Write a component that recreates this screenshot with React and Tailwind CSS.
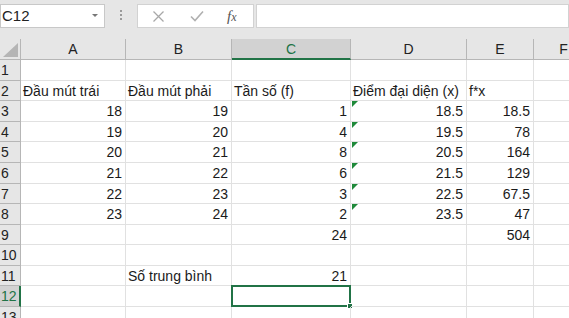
import React from 'react';

const cols = [
  { key: 'A', w: 'w-[105px]' },
  { key: 'B', w: 'w-[106px]' },
  { key: 'C', w: 'w-[119px]' },
  { key: 'D', w: 'w-[116px]' },
  { key: 'E', w: 'w-[67px]' },
  { key: 'F', w: 'w-[60px]' },
];

// heights include the bottom gridline
const rowHeights = [
  'h-[21px]', 'h-[20px]', 'h-[21px]', 'h-[20px]', 'h-[21px]', 'h-[21px]',
  'h-[20px]', 'h-[21px]', 'h-[20px]', 'h-[21px]', 'h-[20px]', 'h-[21px]', 'h-[21px]',
];

// [value, align] per column
const data = {
  2: { A: ['Đầu mút trái', 'l'], B: ['Đầu mút phải', 'l'], C: ['Tần số (f)', 'l'], D: ['Điểm đại diện (x)', 'l'], E: ['f*x', 'l'] },
  3: { A: ['18'], B: ['19'], C: ['1'], D: ['18.5'], E: ['18.5'] },
  4: { A: ['19'], B: ['20'], C: ['4'], D: ['19.5'], E: ['78'] },
  5: { A: ['20'], B: ['21'], C: ['8'], D: ['20.5'], E: ['164'] },
  6: { A: ['21'], B: ['22'], C: ['6'], D: ['21.5'], E: ['129'] },
  7: { A: ['22'], B: ['23'], C: ['3'], D: ['22.5'], E: ['67.5'] },
  8: { A: ['23'], B: ['24'], C: ['2'], D: ['23.5'], E: ['47'] },
  9: { C: ['24'], E: ['504'] },
  11: { B: ['Số trung bình', 'l'], C: ['21'] },
};

const Toolbar = () => (
  <div className="flex h-[39px] items-start bg-[#e6e6e6] pt-[4px]">
    {/* name box */}
    <div className="relative flex h-[24px] w-[105px] items-center border border-[#c8c8c8] bg-white pl-[1px] text-[15px] text-[#222]">
      C12
      <span className="absolute right-[6px] top-[9px] h-0 w-0 border-x-[3px] border-t-[3px] border-x-transparent border-t-[#777]"></span>
    </div>
    {/* dots */}
    <div className="flex w-[32px] flex-col items-center gap-[2px] pt-[6px]">
      <span className="h-[2px] w-[2px] bg-[#9a9a9a]"></span>
      <span className="h-[2px] w-[2px] bg-[#9a9a9a]"></span>
      <span className="h-[2px] w-[2px] bg-[#9a9a9a]"></span>
    </div>
    {/* cancel / enter / fx */}
    <div className="flex h-[24px] w-[117px] items-center border border-[#d2d2d2] bg-white">
      <svg className="ml-[14px]" width="13" height="13" viewBox="0 0 13 13">
        <path d="M1.5 1.5 L11.5 11.5 M11.5 1.5 L1.5 11.5" stroke="#a8a8a8" strokeWidth="1.3" fill="none" />
      </svg>
      <svg className="ml-[25px]" width="14" height="12" viewBox="0 0 14 12">
        <path d="M1 6.5 L5 10.5 L13 1.5" stroke="#b0b0b0" strokeWidth="1.6" fill="none" />
      </svg>
      <span className="ml-[23px] font-['Liberation_Serif',serif] text-[15px] italic text-[#555]">
        f<span className="text-[12px]">x</span>
      </span>
    </div>
    <div className="ml-[2px] h-[24px] flex-1 border border-[#d2d2d2] bg-white"></div>
  </div>
);

const HeaderRow = () => (
  <div className="flex h-[21px]">
    <div className="relative w-[21px] shrink-0 border-b border-r border-[#b6b6b6] bg-[#e6e6e6]">
      <span className="absolute bottom-[2px] right-[2px] h-0 w-0 border-b-[14px] border-l-[15px] border-b-[#b5b5b5] border-l-transparent"></span>
    </div>
    {cols.map((c) =>
      c.key === 'C' ? (
        <div key={c.key} className={`${c.w} shrink-0 border-b-2 border-r border-b-[#217346] border-r-[#b6b6b6] bg-[#d2d2d2] pt-[1px] text-center text-[14px] leading-[18px] text-[#217346]`}>
          {c.key}
        </div>
      ) : (
        <div key={c.key} className={`${c.w} shrink-0 border-b border-r border-[#b6b6b6] bg-[#e6e6e6] pt-[1px] text-center text-[14px] leading-[19px] text-[#222]`}>
          {c.key}
        </div>
      )
    )}
  </div>
);

const Row = ({ n }) => {
  const vals = data[n] || {};
  const active = n === 12;
  return (
    <div className={`flex ${rowHeights[n - 1]}`}>
      {active ? (
        <div className="w-[21px] shrink-0 border-b border-r-2 border-b-[#b6b6b6] border-r-[#217346] bg-[#d2d2d2] pl-[1px] text-[14px] leading-[20px] text-[#217346]">
          {n}
        </div>
      ) : (
        <div className="w-[21px] shrink-0 border-b border-r border-[#b6b6b6] bg-[#e6e6e6] pl-[1px] text-[14px] leading-[20px] text-[#222]">
          {n}
        </div>
      )}
      {cols.map((c) => {
        const v = vals[c.key];
        const left = v && v[1] === 'l';
        const flag = c.key === 'D' && n >= 3 && n <= 8;
        const sel = active && c.key === 'C';
        return (
          <div
            key={c.key}
            className={`relative ${c.w} shrink-0 overflow-visible whitespace-nowrap border-b border-r border-[#e1e1e1] text-[14px] leading-[20px] text-[#1a1a1a] ${left ? 'pl-[2px] text-left' : 'pr-[3px] text-right'}`}
          >
            {v ? v[0] : ''}
            {flag && (
              <span className="absolute left-[1px] top-0 h-0 w-0 border-r-[6px] border-t-[6px] border-r-transparent border-t-[#1f8a3a]"></span>
            )}
            {sel && (
              <>
                <span className="absolute -left-[1px] -top-[1px] bottom-[-1px] right-[-1px] border-2 border-[#217346]"></span>
                <span className="absolute bottom-[-3px] right-[-3px] h-[6px] w-[6px] border border-white bg-[#217346]"></span>
              </>
            )}
          </div>
        );
      })}
    </div>
  );
};

export default function App() {
  return (
    <div className="h-[318px] w-[569px] overflow-hidden bg-white font-['Liberation_Sans',Arial,sans-serif]">
      <Toolbar />
      <HeaderRow />
      {Array.from({ length: 13 }, (_, i) => (
        <Row key={i + 1} n={i + 1} />
      ))}
    </div>
  );
}
